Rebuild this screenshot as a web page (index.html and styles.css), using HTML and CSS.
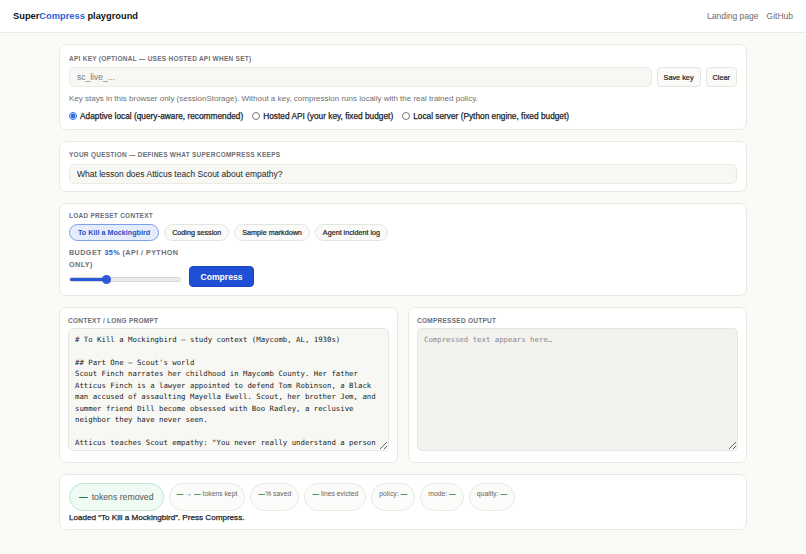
FILE: index.html
```html
<!DOCTYPE html>
<html lang="en">
<head>
<meta charset="utf-8">
<title>SuperCompress playground</title>
<link rel="stylesheet" href="styles.css">
</head>
<body>
<header class="topbar">
  <div class="brand">Super<span class="brand-accent">Compress</span> playground</div>
  <nav class="links">
    <a href="#">Landing page</a>
    <a href="#">GitHub</a>
  </nav>
</header>

<main class="wrap">
  <section class="card card-key">
    <div class="label">API key (optional — uses hosted API when set)</div>
    <div class="key-row">
      <input class="field key-field" type="text" placeholder="sc_live_...">
      <button class="btn">Save key</button>
      <button class="btn">Clear</button>
    </div>
    <p class="help">Key stays in this browser only (sessionStorage). Without a key, compression runs locally with the real trained policy.</p>
    <div class="radios">
      <label class="radio"><input type="radio" name="mode" checked> Adaptive local (query-aware, recommended)</label>
      <label class="radio"><input type="radio" name="mode"> Hosted API (your key, fixed budget)</label>
      <label class="radio"><input type="radio" name="mode"> Local server (Python engine, fixed budget)</label>
    </div>
  </section>

  <section class="card card-q">
    <div class="label">Your question — defines what SuperCompress keeps</div>
    <input class="field q-field" type="text" value="What lesson does Atticus teach Scout about empathy?">
  </section>

  <section class="card card-preset">
    <div class="label">Load preset context</div>
    <div class="chips">
      <button class="chip chip-active">To Kill a Mockingbird</button>
      <button class="chip">Coding session</button>
      <button class="chip">Sample markdown</button>
      <button class="chip">Agent incident log</button>
    </div>
    <div class="budget-row">
      <div class="budget-col">
        <div class="budget-label"><span class="nw">Budget</span> <span class="budget-val">35%</span> <span class="nw">(API / Python</span> <span class="nw">only)</span></div>
        <input class="slider" type="range" min="10" max="90" value="35">
      </div>
      <button class="btn-primary">Compress</button>
    </div>
  </section>

  <div class="split">
    <section class="card card-pane">
      <div class="label label-pane">Context / long prompt</div>
      <textarea class="pane pane-in" spellcheck="false"># To Kill a Mockingbird — study context (Maycomb, AL, 1930s)

## Part One — Scout's world
Scout Finch narrates her childhood in Maycomb County. Her father Atticus Finch is a lawyer appointed to defend Tom Robinson, a Black man accused of assaulting Mayella Ewell. Scout, her brother Jem, and summer friend Dill become obsessed with Boo Radley, a reclusive neighbor they have never seen.

Atticus teaches Scout empathy: "You never really understand a person until you consider things from his point of view... until you climb into his skin and walk around in it."</textarea>
    </section>
    <section class="card card-pane">
      <div class="label label-pane">Compressed output</div>
      <textarea class="pane pane-out" readonly placeholder="Compressed text appears here…"></textarea>
    </section>
  </div>

  <section class="card card-stats">
    <div class="stats">
      <div class="stat stat-main"><b class="dash">—</b> tokens removed</div>
      <div class="stat"><b class="dash">—</b> → <b class="dash">—</b> tokens kept</div>
      <div class="stat"><b class="dash">—</b>% saved</div>
      <div class="stat"><b class="dash">—</b> lines evicted</div>
      <div class="stat">policy: <b class="dash">—</b></div>
      <div class="stat">mode: <b class="dash">—</b></div>
      <div class="stat">quality: <b class="dash">—</b></div>
    </div>
    <p class="status">Loaded “To Kill a Mockingbird”. Press Compress.</p>
  </section>
</main>
</body>
</html>
```

FILE: styles.css
```css
* { box-sizing: border-box; }

html, body {
  margin: 0;
  padding: 0;
}

body {
  background: #fafaf7;
  font-family: "Liberation Sans", Arial, Helvetica, sans-serif;
  color: #1d1d1f;
}

.topbar {
  height: 33px;
  background: #ffffff;
  border-bottom: 1px solid #ebebe6;
  display: flex;
  align-items: center;
  justify-content: space-between;
  padding: 0 13px;
}

.brand {
  font-size: 9.3px;
  font-weight: 700;
  color: #111;
}

.brand-accent { color: #2c5fd8; }

.links {
  display: flex;
  gap: 8px;
}

.links a {
  font-size: 8.5px;
  color: #6b6b6b;
  text-decoration: none;
}

.wrap {
  width: 688px;
  margin: 0 auto;
  padding-top: 11px;
  display: flex;
  flex-direction: column;
  gap: 11px;
}

.card {
  background: #ffffff;
  border: 1px solid #e9e9e4;
  border-radius: 7px;
  padding: 9px 9px 8px;
}

.card-key { padding-bottom: 7px; }

.label {
  font-size: 6.5px;
  font-weight: 700;
  letter-spacing: 0.04em;
  text-transform: uppercase;
  color: #6e6e76;
  line-height: 9px;
  margin-bottom: 4px;
}

.key-row {
  display: flex;
  gap: 5px;
}

.field {
  height: 20px;
  background: #f7f7f3;
  border: 1px solid #ebebe5;
  border-radius: 5px;
  padding: 0 7px;
  font-family: inherit;
  font-size: 8.5px;
  color: #1d1d1f;
  outline: none;
}

.field::placeholder { color: #7a7a7a; }

.key-field { flex: 1; }

.q-field { width: 100%; }

.btn {
  height: 20px;
  padding: 0 6px;
  background: #fafaf8;
  border: 1px solid #e5e5e0;
  border-radius: 4px;
  font-family: inherit;
  font-size: 7.3px;
  font-weight: 400;
  -webkit-text-stroke: 0.2px currentColor;
  color: #222;
}

.help {
  margin: 6px 0 0;
  font-size: 8px;
  line-height: 11px;
  color: #707070;
}

.radios {
  display: flex;
  gap: 9px;
  margin-top: 6px;
  height: 12px;
  align-items: center;
}

.radio {
  display: flex;
  align-items: center;
  gap: 3px;
  font-size: 8.3px;
  font-weight: 400;
  -webkit-text-stroke: 0.25px currentColor;
  color: #1d1d1f;
}

.radio input {
  margin: 0;
  width: 8px;
  height: 8px;
  accent-color: #2b6de0;
}

.card-q { padding: 8px 9px 7px; }

.card-preset { padding-top: 7px; }

.chips {
  display: flex;
  gap: 5px;
}

.chip {
  height: 17px;
  padding: 0 7px;
  border-radius: 9px;
  background: #fafaf8;
  border: 1px solid #e5e5e0;
  font-family: inherit;
  font-size: 7.2px;
  font-weight: 400;
  -webkit-text-stroke: 0.2px currentColor;
  color: #222;
}

.chip-active {
  padding: 0 8px;
  background: #e5edfc;
  border-color: #7d9fe6;
  color: #1f4fc8;
  font-weight: 700;
  font-size: 7.2px;
  -webkit-text-stroke: 0;
}

.budget-row {
  display: flex;
  align-items: flex-end;
  gap: 8px;
  margin-top: 6px;
}

.budget-col {
  width: 112px;
  display: flex;
  flex-direction: column;
}

.budget-label {
  font-size: 7.2px;
  font-weight: 700;
  letter-spacing: 0.06em;
  text-transform: uppercase;
  color: #6e6e76;
  line-height: 12px;
}

.nw { white-space: nowrap; }

.budget-val { color: #2c5fd8; }

.slider {
  -webkit-appearance: none;
  appearance: none;
  width: 112px;
  height: 5px;
  margin: 6px 0 5px;
  border-radius: 3px;
  border: 1px solid #d6d6d6;
  background: linear-gradient(#2b59d9, #2b59d9) 0 0 / 33% 100% no-repeat, #ebebeb;
}

.slider::-webkit-slider-thumb {
  -webkit-appearance: none;
  appearance: none;
  width: 9px;
  height: 9px;
  border-radius: 50%;
  background: #2b59d9;
  border: none;
}

.btn-primary {
  width: 65px;
  height: 21px;
  background: #1f4fd6;
  color: #ffffff;
  border: 1px solid #1a45c0;
  border-radius: 4px;
  font-family: inherit;
  font-size: 8.6px;
  font-weight: 700;
}

.split {
  display: grid;
  grid-template-columns: 1fr 1fr;
  gap: 10px;
}

.card-pane {
  padding: 8px 8px 11px;
}

.label-pane { margin-bottom: 3px; }

.pane {
  display: block;
  width: 100%;
  height: 123px;
  margin: 0;
  resize: vertical;
  border: 1px solid #e6e6e0;
  border-radius: 5px;
  padding: 5px 6px;
  font-family: "DejaVu Sans Mono", "Liberation Mono", monospace;
  font-size: 7.35px;
  line-height: 11.45px;
  color: #222;
  outline: none;
  scrollbar-width: none;
}

.pane::-webkit-scrollbar { display: none; }

.pane-in { background: #f7f7f3; }

.pane-out { background: #f2f2ef; }

.pane-out::placeholder { color: #8a8a8a; }

.card-stats { padding: 8px 9px 6px; }

.stats {
  display: flex;
  gap: 5px;
}

.stat {
  min-height: 28px;
  padding: 5px 7px 0;
  border-radius: 14px;
  background: #fbfbf9;
  border: 1px solid #e9e9e4;
  font-size: 6.8px;
  color: #666;
  line-height: 9px;
}

.dash {
  color: #1a7f4b;
  font-weight: 700;
}

.stat-main {
  display: flex;
  align-items: center;
  gap: 4px;
  padding: 0 9px;
  background: #eefaf3;
  border-color: #bfe6cf;
  font-size: 8.7px;
  color: #555;
}

.status {
  margin: 1px 0 0;
  font-size: 8.1px;
  font-weight: 400;
  -webkit-text-stroke: 0.25px currentColor;
  line-height: 11px;
  color: #1d1d1f;
}
```
